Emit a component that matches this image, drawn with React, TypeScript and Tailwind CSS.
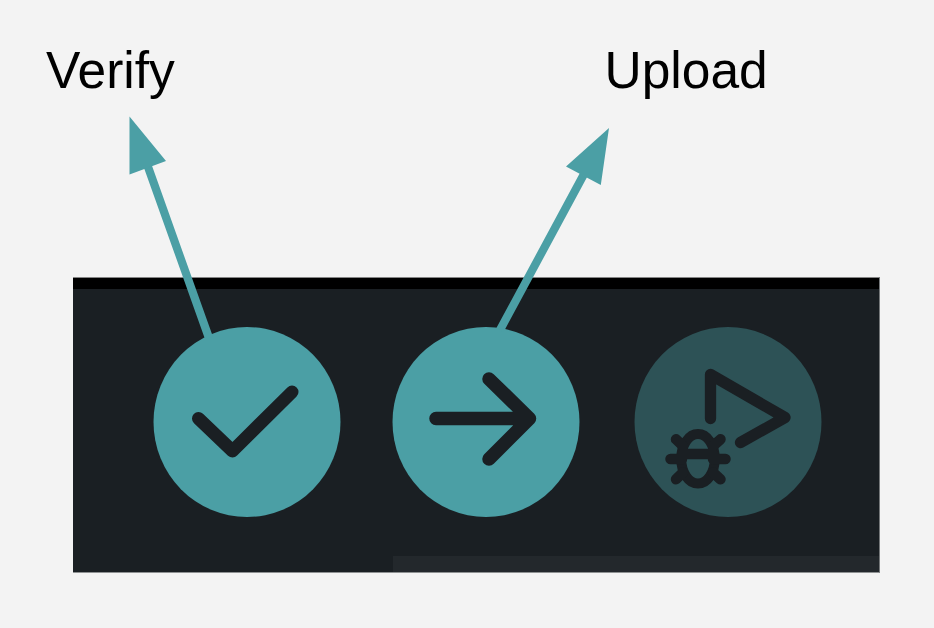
import type { ReactNode } from "react";

const FONT = "font-['Liberation_Sans',Arial,sans-serif]";

function RoundButton({ label, fill, children }: { label: string; fill: string; children: ReactNode }) {
  return (
    <button aria-label={label} className="h-[190px] w-[188px] shrink-0">
      <svg viewBox="0 0 188 190" className="block h-full w-full" fill="none" stroke="#1a1f23" strokeLinecap="round" strokeLinejoin="round">
        <ellipse cx="94" cy="95" rx="93.5" ry="95" fill={fill} stroke="none" />
        {children}
      </svg>
    </button>
  );
}

export default function App() {
  return (
    <main className={`relative flex h-[628px] w-[934px] flex-col overflow-hidden bg-[#f3f3f3] ${FONT}`}>
      <header className="flex h-[277px] shrink-0 pt-[40px] pl-[46px] text-[51.500px] leading-[60px] text-black">
        <span className="w-[558.500px]">Verify</span>
        <span>Upload</span>
      </header>

      <section className="ml-[73px] flex h-[296px] w-[807px] flex-col border-t border-r border-b border-t-[#858585] border-r-[#75787a] border-b-[#8e9192] bg-[#1a1f23]">
        <div className="h-[11px] shrink-0 bg-black" />
        <div className="flex h-[267px] shrink-0 pt-[38px] pl-[80px]">
          <RoundButton label="Verify" fill="#4b9fa5">
            <path d="M45.500 91.500 79.500 124 139 65" strokeWidth="13" />
          </RoundButton>
          <div className="w-[51px] shrink-0" />
          <RoundButton label="Upload" fill="#4b9fa5">
            <path d="M44 91.500H136M97 52 137.500 91.500 97 132" strokeWidth="13.500" />
          </RoundButton>
          <div className="w-[54px] shrink-0" />
          <RoundButton label="Debug" fill="#2d5256">
            <path d="M76.500 91.500V47.500L151 90.500 106.500 115.500" strokeWidth="11.300" />
            <ellipse cx="64" cy="131.800" rx="16.800" ry="24.800" strokeWidth="10" />
            <path
              d="M49 127H79M36.500 132H48M79 132H91.500M42 112.300 49 119M86.500 112.300 79 119M42 152.300 49 145.500M86.500 152.300 79 145.500"
              strokeWidth="10.500"
            />
          </RoundButton>
        </div>
        <div className="ml-[320px] h-[16px] bg-[#23282c]" />
      </section>

      <svg viewBox="0 0 934 628" className="pointer-events-none absolute inset-0 h-full w-full" fill="#4b9fa5" stroke="#4b9fa5">
        <path d="M209 338 147.700 166M500 330 583.500 175" strokeWidth="8.200" fill="none" />
        <path d="M129.500 116.500 166 161 129.500 174.500ZM609 128 566 166.500 600.800 185Z" stroke="none" />
      </svg>
    </main>
  );
}
